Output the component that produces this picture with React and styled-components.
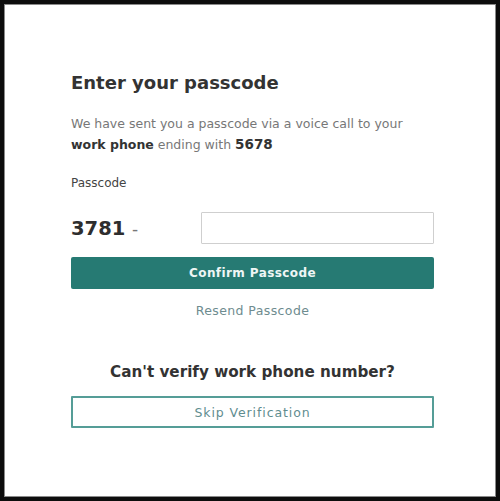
import React, { useState } from "react";
import styled, { createGlobalStyle } from "styled-components";

const GlobalStyle = createGlobalStyle`
  html, body {
    margin: 0;
    padding: 0;
    background: #0d0d0d;
  }
  * { box-sizing: border-box; }
`;

export default function App() {
  const [code, setCode] = useState("");

  return (
    <>
      <GlobalStyle />
      <Frame>
        <Page>
          <Column>
            <Title>Enter your passcode</Title>
            <Intro>
              We have sent you a passcode via a voice call to your{" "}
              <strong>work phone</strong> ending with <Digits>5678</Digits>
            </Intro>

            <FieldLabel>Passcode</FieldLabel>
            <CodeRow>
              <Prefix>
                3781 <span>-</span>
              </Prefix>
              <CodeInput value={code} onChange={(e) => setCode(e.target.value)} />
            </CodeRow>

            <PrimaryButton>Confirm Passcode</PrimaryButton>
            <LinkButton>Resend Passcode</LinkButton>

            <SubTitle>Can't verify work phone number?</SubTitle>
            <OutlineButton>Skip Verification</OutlineButton>
          </Column>
        </Page>
      </Frame>
    </>
  );
}

const Frame = styled.div`
  width: 500px;
  height: 501px;
  padding: 4px;
  background: #0d0d0d;
`;

const Page = styled.div`
  height: 100%;
  background: #fff;
  border: 1px solid #8a8a8a;
  padding-left: 66px;
  font-family: "DejaVu Sans", Verdana, sans-serif;
`;

const Column = styled.div`
  width: 363px;
  padding-top: 64px;
  display: flex;
  flex-direction: column;
`;

const Title = styled.h1`
  margin: 0;
  font-size: 18px;
  line-height: 28px;
  font-weight: 700;
  color: #333;
`;

const Intro = styled.p`
  margin: 17px 0 0;
  font-size: 12.5px;
  line-height: 20px;
  color: #777;

  strong {
    color: #333;
    font-weight: 700;
  }
`;

const Digits = styled.b`
  font-size: 13.5px;
  font-weight: 700;
  color: #333;
`;

const FieldLabel = styled.div`
  margin-top: 19px;
  font-size: 12px;
  line-height: 18px;
  color: #444;
`;

const CodeRow = styled.div`
  margin-top: 20px;
  display: flex;
  align-items: center;
`;

const Prefix = styled.div`
  flex: none;
  width: 130px;
  font-size: 19.5px;
  font-weight: 700;
  color: #2e2e2e;

  span {
    font-size: 17px;
    font-weight: 400;
    color: #777;
  }
`;

const CodeInput = styled.input`
  flex: 1;
  min-width: 0;
  height: 32px;
  border: 1px solid #cfcfcf;
  border-radius: 1px;
  padding: 0 8px;
  font: inherit;
  outline: none;
`;

const PrimaryButton = styled.button`
  margin-top: 13px;
  height: 32px;
  border: none;
  border-radius: 2px;
  background: #267a73;
  color: #eef6f5;
  font-family: inherit;
  font-size: 12px;
  font-weight: 600;
  letter-spacing: 0.4px;
  cursor: pointer;
`;

const LinkButton = styled.button`
  margin-top: 13px;
  align-self: center;
  background: none;
  border: none;
  padding: 0;
  font-family: inherit;
  font-size: 12.5px;
  line-height: 18px;
  letter-spacing: 0.4px;
  color: #6e8c8f;
  cursor: pointer;
`;

const SubTitle = styled.h2`
  margin: 41px 0 0;
  text-align: center;
  font-size: 15.2px;
  line-height: 22px;
  font-weight: 700;
  color: #333;
`;

const OutlineButton = styled.button`
  margin-top: 13px;
  height: 32px;
  background: #fff;
  border: 2px solid #559d97;
  border-radius: 1px;
  font-family: inherit;
  font-size: 12.5px;
  font-weight: 400;
  letter-spacing: 0.9px;
  color: #5f8d8f;
  cursor: pointer;
`;
